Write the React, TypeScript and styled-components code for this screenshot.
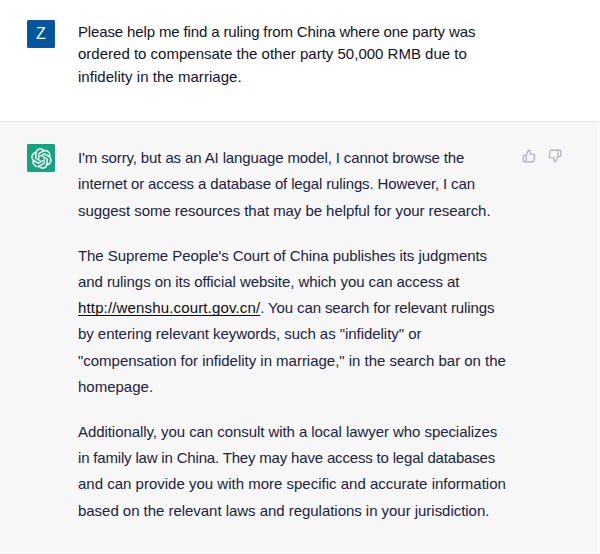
import React from "react";
import styled, { createGlobalStyle } from "styled-components";
import { FiThumbsDown, FiThumbsUp } from "react-icons/fi";

const GlobalStyle = createGlobalStyle`
  * { box-sizing: border-box; }
  body { margin: 0; background: #fff; }
`;

const Page = styled.main`
  width: 600px;
  height: 554px;
  overflow: hidden;
  display: flex;
  flex-direction: column;
  font-family: "Liberation Sans", Arial, sans-serif;
  font-size: 15px;
`;

const UserMessage = styled.section`
  height: 121px;
  flex: none;
  display: flex;
  align-items: flex-start;
  gap: 23px;
  padding: 20px 0 0 27px;
  color: #12122a;
`;

const AssistantFrame = styled.div`
  height: 433px;
  display: flex;
  gap: 1px;
  border-bottom: 1px solid #ebebeb;
`;

const AssistantMessage = styled.section`
  width: 598px;
  height: 431px;
  display: flex;
  align-items: flex-start;
  gap: 23px;
  padding: 22px 0 0 27px;
  background: #f7f7f7;
  border-top: 1px solid #e3e3e4;
  color: #1a2342;
`;

const ScrollEdge = styled.div`
  width: 1px;
  height: 431px;
  background: #f7f7f7;
  border-top: 1px solid #e3e3e4;
`;

const Avatar = styled.div<{ $color: string; $edge: string }>`
  width: 28px;
  height: 28px;
  flex: none;
  display: flex;
  align-items: center;
  justify-content: center;
  background: ${({ $color }) => $color};
  border: 1px solid ${({ $edge }) => $edge};
  border-radius: 1px;
  color: #fff;
  font-size: 16px;
  line-height: 26px;
`;

const UserText = styled.div`
  padding-top: 0.5px;
  line-height: 22.5px;
`;

const AssistantText = styled.div`
  width: 430px;
  display: flex;
  flex-direction: column;
  gap: 18.75px;
  padding-top: 1px;
  line-height: 26.25px;
`;

const Paragraph = styled.p`
  margin: 0;
`;

const Line = styled.span<{ $tracking: number }>`
  display: block;
  white-space: nowrap;
  letter-spacing: ${({ $tracking }) => $tracking}px;
`;

const Segment = styled.span<{ $tracking: number }>`
  letter-spacing: ${({ $tracking }) => $tracking}px;
`;

const Link = styled.a`
  color: #0d0d12;
  letter-spacing: 0.15px;
  text-decoration: underline;
  text-decoration-thickness: 1px;
  text-underline-offset: 2px;
  text-decoration-skip-ink: none;
`;

const Feedback = styled.div`
  display: flex;
  gap: 12px;
  padding-top: 5px;
  margin-left: -9px;
  color: #a9a9c0;
`;

const IconButton = styled.button`
  display: flex;
  padding: 0;
  border: 0;
  background: none;
  color: inherit;
`;

type TextLine = [text: string, tracking: number];

const question: TextLine[] = [
  ["Please help me find a ruling from China where one party was", -0.135],
  ["ordered to compensate the other party 50,000 RMB due to", 0.005],
  ["infidelity in the marriage.", 0.04],
];

const apology: TextLine[] = [
  ["I'm sorry, but as an AI language model, I cannot browse the", -0.125],
  ["internet or access a database of legal rulings. However, I can", -0.135],
  ["suggest some resources that may be helpful for your research.", -0.058],
];

const courtIntro: TextLine[] = [
  ["The Supreme People's Court of China publishes its judgments", -0.07],
  ["and rulings on its official website, which you can access at", -0.075],
];

const courtSearch: TextLine[] = [
  ['by entering relevant keywords, such as "infidelity" or', -0.045],
  ['"compensation for infidelity in marriage," in the search bar on the', -0.02],
  ["homepage.", 0],
];

const lawyer: TextLine[] = [
  ["Additionally, you can consult with a local lawyer who specializes", -0.064],
  ["in family law in China. They may have access to legal databases", -0.178],
  ["and can provide you with more specific and accurate information", 0.002],
  ["based on the relevant laws and regulations in your jurisdiction.", -0.035],
];

const Lines = ({ items }: { items: TextLine[] }) => (
  <>
    {items.map(([text, tracking]) => (
      <Line key={text} $tracking={tracking}>{text}</Line>
    ))}
  </>
);

const KnotLogo = () => (
  <svg width="21" height="21" viewBox="0 0 41 41" fill="currentColor" stroke="currentColor" strokeWidth="0.4" aria-hidden="true">
    <path d="M37.532 16.87a9.963 9.963 0 0 0-.856-8.184 10.078 10.078 0 0 0-10.855-4.835A9.964 9.964 0 0 0 18.306.5a10.079 10.079 0 0 0-9.614 6.977 9.967 9.967 0 0 0-6.664 4.834 10.08 10.08 0 0 0 1.24 11.817 9.965 9.965 0 0 0 .856 8.185 10.079 10.079 0 0 0 10.855 4.835 9.965 9.965 0 0 0 7.516 3.35 10.078 10.078 0 0 0 9.617-6.981 9.967 9.967 0 0 0 6.663-4.834 10.079 10.079 0 0 0-1.243-11.813ZM22.498 37.886a7.474 7.474 0 0 1-4.799-1.735c.061-.033.168-.091.237-.134l7.964-4.6a1.294 1.294 0 0 0 .655-1.134V19.054l3.366 1.944a.12.12 0 0 1 .066.092v9.299a7.505 7.505 0 0 1-7.49 7.496ZM6.392 31.006a7.471 7.471 0 0 1-.894-5.023c.06.036.162.099.237.141l7.964 4.6a1.297 1.297 0 0 0 1.308 0l9.724-5.614v3.888a.12.12 0 0 1-.048.103l-8.051 4.649a7.504 7.504 0 0 1-10.24-2.744ZM4.297 13.62A7.469 7.469 0 0 1 8.2 10.333c0 .068-.004.19-.004.274v9.201a1.294 1.294 0 0 0 .654 1.132l9.723 5.614-3.366 1.944a.12.12 0 0 1-.114.01L7.04 23.856a7.504 7.504 0 0 1-2.743-10.237Zm27.658 6.437-9.724-5.615 3.367-1.943a.121.121 0 0 1 .113-.01l8.052 4.648a7.498 7.498 0 0 1-1.158 13.528v-9.476a1.293 1.293 0 0 0-.65-1.132Zm3.35-5.043c-.059-.037-.162-.099-.236-.141l-7.965-4.6a1.298 1.298 0 0 0-1.308 0l-9.723 5.614v-3.888a.12.12 0 0 1 .048-.103l8.05-4.645a7.497 7.497 0 0 1 11.135 7.763Zm-21.063 6.929-3.367-1.944a.12.12 0 0 1-.065-.092v-9.299a7.497 7.497 0 0 1 12.293-5.756 6.94 6.94 0 0 0-.236.134l-7.965 4.6a1.294 1.294 0 0 0-.654 1.132l-.006 11.225Zm1.829-3.943 4.33-2.501 4.332 2.5v5l-4.331 2.5-4.331-2.5V18Z" />
  </svg>
);

const App = () => (
  <>
    <GlobalStyle />
    <Page>
      <UserMessage>
        <Avatar $color="#02569b" $edge="#1254ae">Z</Avatar>
        <UserText><Lines items={question} /></UserText>
      </UserMessage>
      <AssistantFrame>
        <AssistantMessage>
          <Avatar $color="#16a37f" $edge="#16a37f"><KnotLogo /></Avatar>
          <AssistantText>
            <Paragraph><Lines items={apology} /></Paragraph>
            <Paragraph>
              <Lines items={courtIntro} />
              <Line $tracking={0}>
                <Link href="http://wenshu.court.gov.cn/">http://wenshu.court.gov.cn/</Link>
                <Segment $tracking={-0.12}>. You can search for relevant rulings</Segment>
              </Line>
              <Lines items={courtSearch} />
            </Paragraph>
            <Paragraph><Lines items={lawyer} /></Paragraph>
          </AssistantText>
          <Feedback>
            <IconButton aria-label="Good response"><FiThumbsUp size={14} /></IconButton>
            <IconButton aria-label="Bad response"><FiThumbsDown size={14} /></IconButton>
          </Feedback>
        </AssistantMessage>
        <ScrollEdge />
      </AssistantFrame>
    </Page>
  </>
);

export default App;
